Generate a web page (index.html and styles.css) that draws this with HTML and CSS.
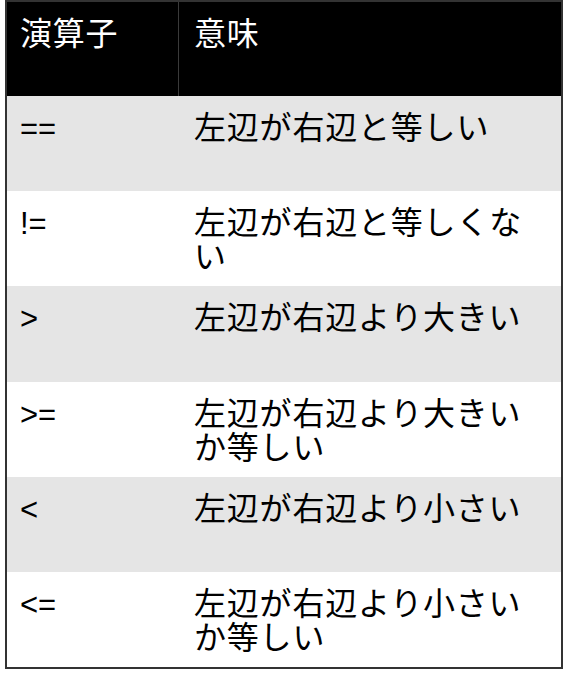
FILE: index.html
```html
<!DOCTYPE html>
<html lang="ja">
<head>
<meta charset="utf-8">
<title>演算子</title>
<link rel="stylesheet" href="styles.css">
</head>
<body>
<table class="ops">
  <colgroup>
    <col class="col-op">
    <col class="col-desc">
  </colgroup>
  <thead>
    <tr class="head-row">
      <th class="cell-op">演算子</th>
      <th class="cell-desc">意味</th>
    </tr>
  </thead>
  <tbody>
    <tr class="row shaded">
      <td class="cell-op op">==</td>
      <td class="cell-desc">左辺が右辺と等しい</td>
    </tr>
    <tr class="row">
      <td class="cell-op op">!=</td>
      <td class="cell-desc">左辺が右辺と等しくない</td>
    </tr>
    <tr class="row shaded">
      <td class="cell-op op">&gt;</td>
      <td class="cell-desc">左辺が右辺より大きい</td>
    </tr>
    <tr class="row">
      <td class="cell-op op">&gt;=</td>
      <td class="cell-desc">左辺が右辺より大きいか等しい</td>
    </tr>
    <tr class="row shaded">
      <td class="cell-op op">&lt;</td>
      <td class="cell-desc">左辺が右辺より小さい</td>
    </tr>
    <tr class="row">
      <td class="cell-op op">&lt;=</td>
      <td class="cell-desc">左辺が右辺より小さいか等しい</td>
    </tr>
  </tbody>
</table>
</body>
</html>
```
FILE: styles.css
```css
html, body {
  margin: 0;
  padding: 0;
  background: #ffffff;
}

body {
  padding: 0 5px;
  font-family: "Noto Sans CJK JP", "Liberation Sans", sans-serif;
  color: #000000;
}

.ops {
  width: 558px;
  table-layout: fixed;
  border-collapse: separate;
  border-spacing: 0;
  border: 2px solid #333333;
  font-size: 32px;
  line-height: 34px;
  letter-spacing: 0.8px;
}

.col-op {
  width: 172px;
}

.head-row {
  height: 94px;
  background: #000000;
  color: #ffffff;
}

.head-row th {
  font-weight: normal;
  text-align: left;
  vertical-align: top;
  padding-top: 12px;
}

.head-row .cell-op {
  border-right: 1px solid #3a3a3a;
}

.row {
  height: 95.2px;
  background: #ffffff;
}

.row.shaded {
  background: #e5e5e5;
}

.cell-op,
.cell-desc {
  padding: 12px 14px 0 15px;
  vertical-align: baseline;
}

.cell-op {
  padding-left: 13px;
}

.op {
  font-family: "Liberation Sans", Arial, sans-serif;
  font-size: 31px;
  letter-spacing: 0;
}
```
